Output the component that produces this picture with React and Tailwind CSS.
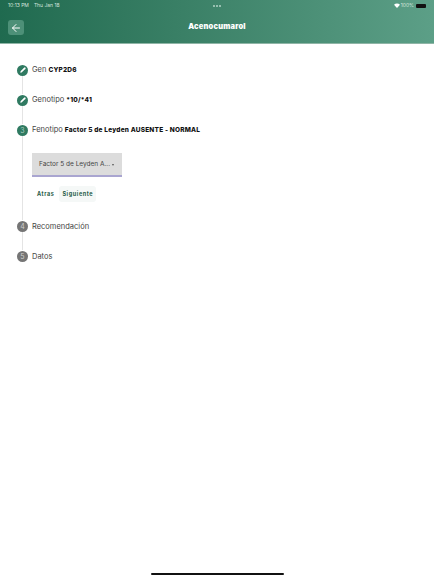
import { ArrowLeft, Pencil } from "lucide-react";

function Done() {
  return (
    <div className="w-[11px] h-[11px] rounded-full bg-[#2f7a61] flex items-center justify-center shrink-0">
      <Pencil size={6} color="#fff" fill="#fff" strokeWidth={1.5} />
    </div>
  );
}

function Num({ n, active }) {
  return (
    <div
      className={`w-[11px] h-[11px] rounded-full flex items-center justify-center shrink-0 text-[7px] leading-none ${
        active ? "bg-[#2f7a61] text-[#a9cfc1]" : "bg-[#757575] text-[#cfcfcf]"
      }`}
    >
      {n}
    </div>
  );
}

function Step({ icon, label, value }) {
  return (
    <div className="flex items-center gap-[4px] h-[12px]">
      {icon}
      <div className="text-[7.5px] text-[#444] whitespace-nowrap">
        {label}
        {value && (
          <span className="ml-[2px] text-[6.5px] font-extrabold text-[#111] tracking-[0.2px]">{value}</span>
        )}
      </div>
    </div>
  );
}

function Line({ h }) {
  return <div className={`w-px bg-[#e4e4e4] ml-[5px] ${h}`} />;
}

export default function App() {
  return (
    <div className="w-[434px] h-[579px] bg-white flex flex-col font-['Inter',sans-serif] overflow-hidden">
      <header className="h-[44px] shrink-0 flex flex-col bg-gradient-to-r from-[#1f6a4f] to-[#5c9f87] border-b border-[#8fb5a6]">
        <div className="h-[11px] px-[8px] flex items-center justify-between text-[5px] text-[#d5e6df]">
          <div className="flex gap-[5px] w-[100px]">
            <span>10:13 PM</span>
            <span>Thu Jan 18</span>
          </div>
          <div className="flex gap-[1px]">
            <span className="w-[2px] h-[2px] rounded-full bg-[#b5d3c7]" />
            <span className="w-[2px] h-[2px] rounded-full bg-[#b5d3c7]" />
            <span className="w-[2px] h-[2px] rounded-full bg-[#b5d3c7]" />
          </div>
          <div className="flex items-center justify-end gap-[1px] w-[100px]">
            <svg width="6" height="5" viewBox="0 0 12 10">
              <path d="M0 3.5 C3.5 0 8.5 0 12 3.5 L6 10 Z" fill="#fff" />
            </svg>
            <span>100%</span>
            <span className="w-[10px] h-[4px] ml-[1px] rounded-[1px] bg-[#111]" />
          </div>
        </div>
        <div className="flex-1 relative flex items-center justify-center">
          <div className="absolute left-[8px] top-[9px] w-[16px] h-[15px] rounded-[3px] bg-[#4d9078] flex items-center justify-center">
            <ArrowLeft size={12} color="#fff" strokeWidth={2} />
          </div>
          <span className="text-[7.5px] font-black text-white tracking-[0.2px] -mt-[1px]">Acenocumarol</span>
        </div>
      </header>

      <main className="flex flex-col pl-[17px] pt-[20px]">
        <Step icon={<Done />} label="Gen" value="CYP2D6" />
        <Line h="h-[18px]" />
        <Step icon={<Done />} label="Genotipo" value="*10/*41" />
        <Line h="h-[18px]" />
        <Step icon={<Num n="3" active />} label="Fenotipo" value="Factor 5 de Leyden AUSENTE - NORMAL" />
        <div className="flex">
          <div className="w-px bg-[#e4e4e4] ml-[5px] mr-[9px]" />
          <div className="flex flex-col pt-[17px] pb-[18px]">
            <div className="w-[90px] h-[24px] bg-[#dcdcdc] border-b-2 border-[#a9a5d0] flex items-center pl-[7px] pt-[2px] text-[6.5px] text-[#444] whitespace-nowrap">
              Factor 5 de Leyden A...
              <span className="ml-[2px] border-x-[1.5px] border-t-[2px] border-x-transparent border-t-[#555]" />
            </div>
            <div className="flex items-center mt-[9px] text-[5.5px] font-bold text-[#1f5a45] tracking-[0.6px]">
              <span className="pl-[5px] pr-[5px] py-[4px]">Atras</span>
              <span className="px-[3px] py-[4px] rounded-[3px] bg-[#f5f8f7]">Siguiente</span>
            </div>
          </div>
        </div>
        <Step icon={<Num n="4" />} label="Recomendación" />
        <Line h="h-[18px]" />
        <Step icon={<Num n="5" />} label="Datos" />
      </main>

      <div className="mt-auto mb-[4px] mx-auto w-[133px] h-[2px] rounded-full bg-[#111]" />
    </div>
  );
}
